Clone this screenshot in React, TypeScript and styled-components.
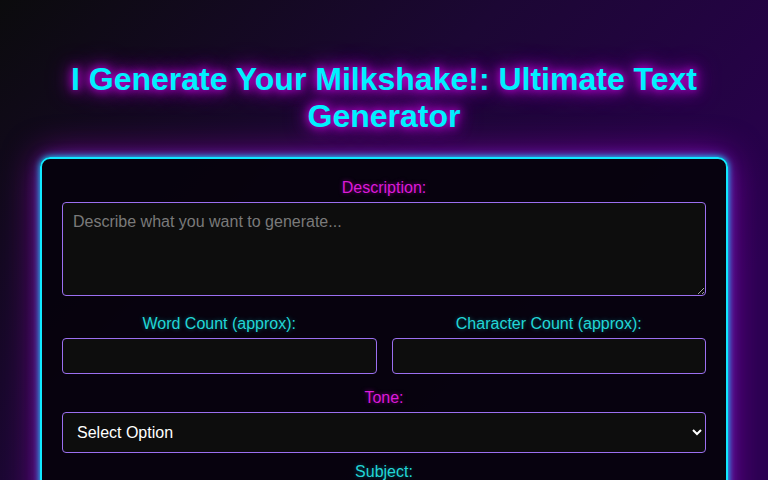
import React from "react";
import styled, { createGlobalStyle } from "styled-components";

const GlobalStyle = createGlobalStyle`
  html, body {
    margin: 0;
    padding: 0;
  }
  body {
    font-family: "Liberation Sans", Arial, sans-serif;
    background: linear-gradient(135deg, #0b0b0d 0%, #1c0734 32%, #2a0050 65%, #2a0050 100%);
    color: #e0e0e0;
    min-height: 100vh;
  }
`;

const Page = styled.div`
  padding: 40px;
`;

const Title = styled.h1`
  margin: 21px 0 22px;
  font-size: 32px;
  font-weight: 700;
  text-align: center;
  color: #00f0ff;
  text-shadow: 0 0 8px #d000e0, 0 0 16px #b000d0, 0 0 24px #8000b0;
`;

const Card = styled.div`
  background: rgba(6, 2, 12, 0.96);
  border: 2px solid #10e8ff;
  border-radius: 10px;
  padding: 20px;
  box-shadow: 0 0 6px #00e5ff, 0 0 14px rgba(120, 80, 255, 0.6),
    0 0 36px rgba(190, 0, 230, 0.65);
`;

const Group = styled.div<{ $mb: number }>`
  display: flex;
  flex-direction: column;
  margin-bottom: ${(p) => p.$mb}px;
`;

const Row = styled.div`
  display: grid;
  grid-template-columns: 1fr 1fr;
  gap: 15px;
  margin-bottom: 15px;
`;

const Label = styled.label<{ $tone: "pink" | "cyan" }>`
  display: block;
  text-align: center;
  font-size: 16px;
  line-height: 18px;
  margin-bottom: 5px;
  color: ${(p) => (p.$tone === "pink" ? "#dc1ad8" : "#22d6d6")};
  text-shadow: 0 0 4px
    ${(p) => (p.$tone === "pink" ? "rgba(220,0,220,0.5)" : "rgba(0,220,220,0.4)")};
`;

const fieldBase = `
  box-sizing: border-box;
  width: 100%;
  background: #0d0d0d;
  border: 1px solid #9b6ff0;
  border-radius: 4px;
  color: #e8e8e8;
  font-family: "Liberation Sans", Arial, sans-serif;
  font-size: 16px;
  outline: none;
`;

const TextArea = styled.textarea`
  ${fieldBase}
  display: block;
  height: 94px;
  padding: 10px;
  resize: vertical;
  &::placeholder {
    color: #7a7a7a;
  }
`;

const Input = styled.input`
  ${fieldBase}
  display: block;
  height: 36px;
  padding: 8px 10px;
`;

const Select = styled.select`
  ${fieldBase}
  display: block;
  height: 41px;
  padding: 10px;
  color-scheme: dark;
  color: #ffffff;
`;

const Button = styled.button`
  display: block;
  width: 100%;
  padding: 12px;
  border: 2px solid #10e8ff;
  border-radius: 6px;
  background: #1a0630;
  color: #00f0ff;
  font-family: "Liberation Sans", Arial, sans-serif;
  font-size: 18px;
  font-weight: 700;
`;

export default function App() {
  return (
    <>
      <GlobalStyle />
      <Page>
        <Title>I Generate Your Milkshake!: Ultimate Text Generator</Title>
        <Card>
          <Group $mb={19}>
            <Label $tone="pink">Description:</Label>
            <TextArea placeholder="Describe what you want to generate..." />
          </Group>
          <Row>
            <Group $mb={0}>
              <Label $tone="cyan">Word Count (approx):</Label>
              <Input type="number" />
            </Group>
            <Group $mb={0}>
              <Label $tone="cyan">Character Count (approx):</Label>
              <Input type="number" />
            </Group>
          </Row>
          <Group $mb={10}>
            <Label $tone="pink">Tone:</Label>
            <Select defaultValue="">
              <option value="">Select Option</option>
              <option>Formal</option>
              <option>Casual</option>
              <option>Funny</option>
            </Select>
          </Group>
          <Group $mb={14}>
            <Label $tone="cyan">Subject:</Label>
            <Input type="text" />
          </Group>
          <Group $mb={14}>
            <Label $tone="pink">Audience:</Label>
            <Select defaultValue="">
              <option value="">Select Option</option>
            </Select>
          </Group>
          <Group $mb={20}>
            <Label $tone="cyan">Keywords:</Label>
            <Input type="text" />
          </Group>
          <Button>Generate</Button>
        </Card>
      </Page>
    </>
  );
}
